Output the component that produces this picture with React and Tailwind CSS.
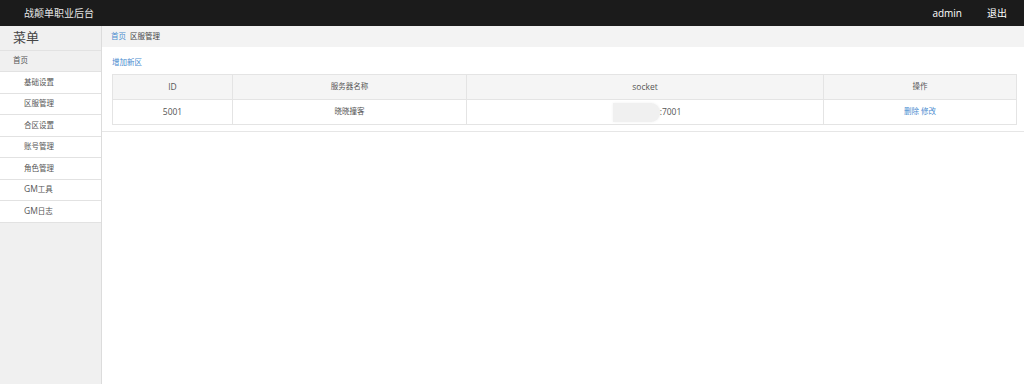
const FONT = { fontFamily: '"Open Sans", "Noto Sans CJK SC", sans-serif' };

const MENU = [['', '基础设置'], ['', '区服管理'], ['', '合区设置'], ['', '账号管理'], ['', '角色管理'], ['GM', '工具'], ['GM', '日志']];

export default function App() {
  return (
    <div className="h-[384px] w-[1024px] flex flex-col overflow-hidden bg-white" style={FONT}>
      {/* top bar */}
      <div className="h-[26px] shrink-0 bg-[#1b1b1b] flex items-center justify-between pl-[24px] pr-[17px]">
        <span className="text-[10px] text-[#e8e8e8]">战颠单职业后台</span>
        <div className="flex items-center gap-[25px] text-[10px] text-white">
          <span>admin</span>
          <span>退出</span>
        </div>
      </div>

      <div className="flex flex-1 min-h-0">
        {/* sidebar */}
        <div className="w-[102px] shrink-0 bg-[#f0f0f0] border-r border-[#dcdcdc]">
          <div className="h-[25px] flex items-center pl-[13px] text-[13px] text-[#444] border-b border-[#e2e2e2]">
            菜单
          </div>
          <div className="h-[21px] flex items-center pl-[13px] text-[7.5px] text-[#555] border-b border-[#e2e2e2]">
            首页
          </div>
          {MENU.map(([en, zh]) => (
            <div key={zh} className="h-[21.5px] flex items-center pl-[24px] text-[7.5px] text-[#555] bg-white border-b border-[#e2e2e2]">
              {en && <span className="text-[8.5px]">{en}</span>}
              {zh}
            </div>
          ))}
        </div>

        {/* main */}
        <div className="flex-1 min-w-0">
          <div className="h-[21px] bg-[#f3f3f3] flex items-center gap-[4px] pl-[9px] text-[7.5px]">
            <span className="text-[#4a8ccf]">首页</span>
            <span className="text-[#444]">区服管理</span>
          </div>
          <div className="pl-[10px] pr-[7px] pt-[11px] pb-[6px] border-b border-[#e6e6e6]">
            <div className="h-[10px] flex items-center text-[7.5px] text-[#4a8ccf] mb-[6px]">增加新区</div>
            <table className="w-full border-collapse border border-[#e4e4e4] text-[7.5px] text-[#555]">
              <thead>
                <tr className="h-[25px] bg-[#f5f5f5]">
                  <th className="w-[120px] font-normal text-[8.5px] border border-[#e4e4e4]">ID</th>
                  <th className="w-[234px] font-normal border border-[#e4e4e4]">服务器名称</th>
                  <th className="w-[357px] font-normal text-[8.5px] border border-[#e4e4e4]">socket</th>
                  <th className="font-normal border border-[#e4e4e4]">操作</th>
                </tr>
              </thead>
              <tbody>
                <tr className="h-[25px]">
                  <td className="text-center text-[8.5px] border border-[#e4e4e4]">5001</td>
                  <td className="text-center border border-[#e4e4e4]">晓晓撞客</td>
                  <td className="border border-[#e4e4e4]">
                    <div className="flex items-center justify-center pl-[4px]">
                      <span className="w-[47px] h-[19px] rounded-r-[9px] bg-[#f0f0f0] shadow-[0_0_3px_#f0f0f0]" />
                      <span className="text-[8.5px]">:7001</span>
                    </div>
                  </td>
                  <td className="text-center border border-[#e4e4e4]">
                    <span className="text-[#4a8ccf]">删除</span>{' '}
                    <span className="text-[#4a8ccf]">修改</span>
                  </td>
                </tr>
              </tbody>
            </table>
          </div>
        </div>
      </div>
    </div>
  );
}
